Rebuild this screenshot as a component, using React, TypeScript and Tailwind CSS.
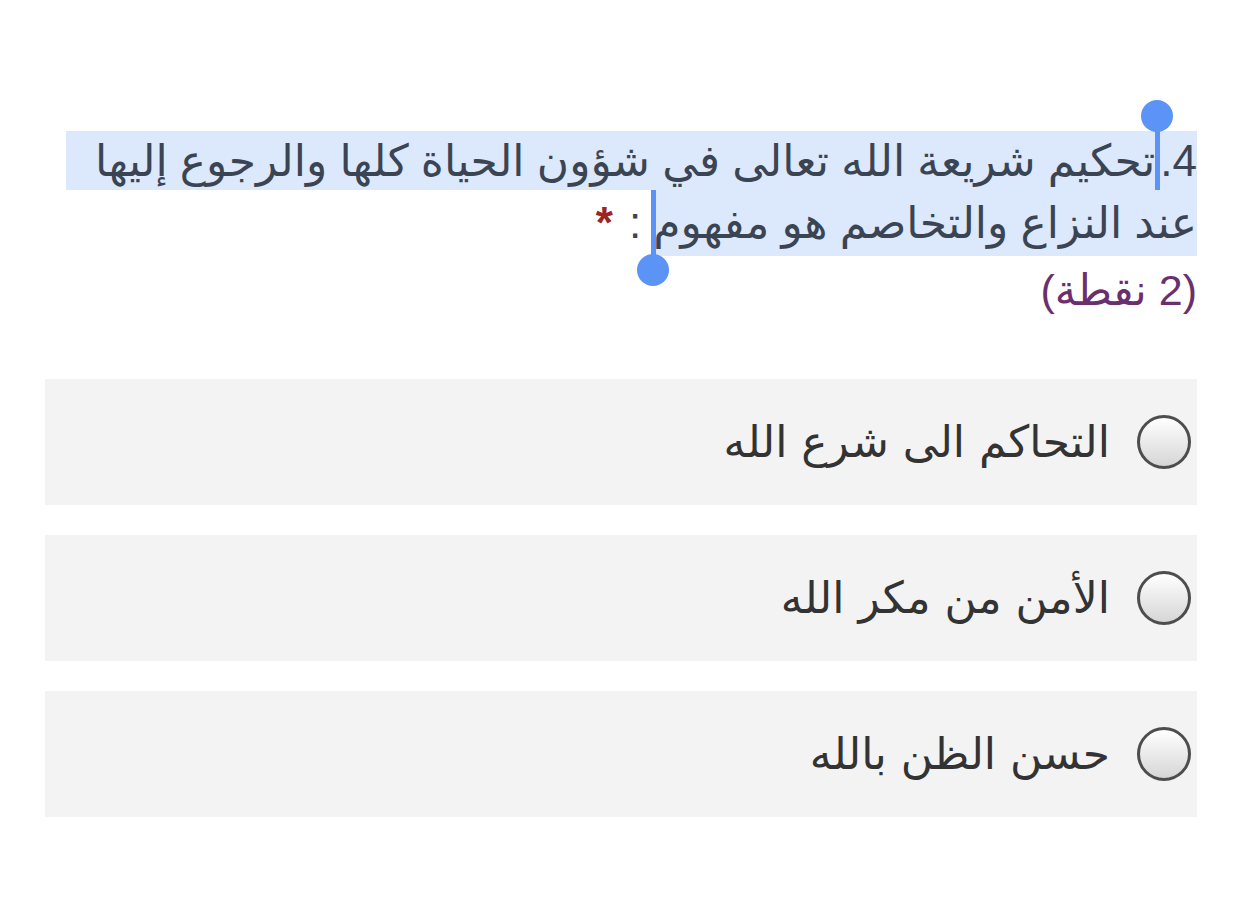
export default function App() {
  const options = ["التحاكم الى شرع الله", "الأمن من مكر الله", "حسن الظن بالله"];

  return (
    <div dir="rtl" className="min-h-screen bg-white px-[45px] pt-[131px] font-['Liberation_Sans','DejaVu_Sans',sans-serif]">
      {/* QUESTION */}
      <div className="ml-[21px] text-[44px] text-[#3b4453]">
        <div className="h-[59px] leading-[59px] bg-[#dce8fb] whitespace-nowrap">
          4.
          <span className="relative inline-block w-[5px] h-[59px] align-top">
            <span className="absolute right-[-13px] top-[-31px] w-[32px] h-[32px] rounded-full bg-[#5b94f6]"></span>
            <span className="absolute right-0 top-[-15px] w-[5px] h-[74px] bg-[#5b94f6]"></span>
          </span>
          تحكيم شريعة الله تعالى في شؤون الحياة كلها والرجوع إليها
        </div>
        <div className="h-[66px] leading-[66px] whitespace-nowrap">
          <span className="bg-[#dce8fb] inline-block h-[66px]">عند النزاع والتخاصم هو مفهوم</span>
          <span className="relative inline-block w-0 h-[66px] align-top">
            <span className="absolute left-[-2px] top-0 w-[5px] h-[66px] bg-[#5b94f6]"></span>
            <span className="absolute left-[-16px] top-[64px] w-[32px] h-[32px] rounded-full bg-[#5b94f6]"></span>
          </span>
          <span className="mr-[12px]">:</span>
          <span className="mr-[16px] font-bold text-[#9e2323]">*</span>
        </div>
        <div className="pt-[6px] text-[43px] leading-[56px] text-[#6b2f70]">(2 نقطة)</div>
      </div>

      {/* OPTIONS */}
      <div className="mt-[61px] flex flex-col gap-[30px]">
        {options.map((o, i) => (
          <div key={i} className="h-[126px] bg-[#f3f3f3] flex items-center pr-[6px] gap-[27px]">
            <span className="w-[54px] h-[54px] shrink-0 rounded-full border-[3px] border-[#4d4d4d] bg-gradient-to-b from-white to-[#d6d6d6]"></span>
            <span className="text-[44px] text-[#333333] font-['DejaVu_Sans',sans-serif]">{o}</span>
          </div>
        ))}
      </div>
    </div>
  );
}
